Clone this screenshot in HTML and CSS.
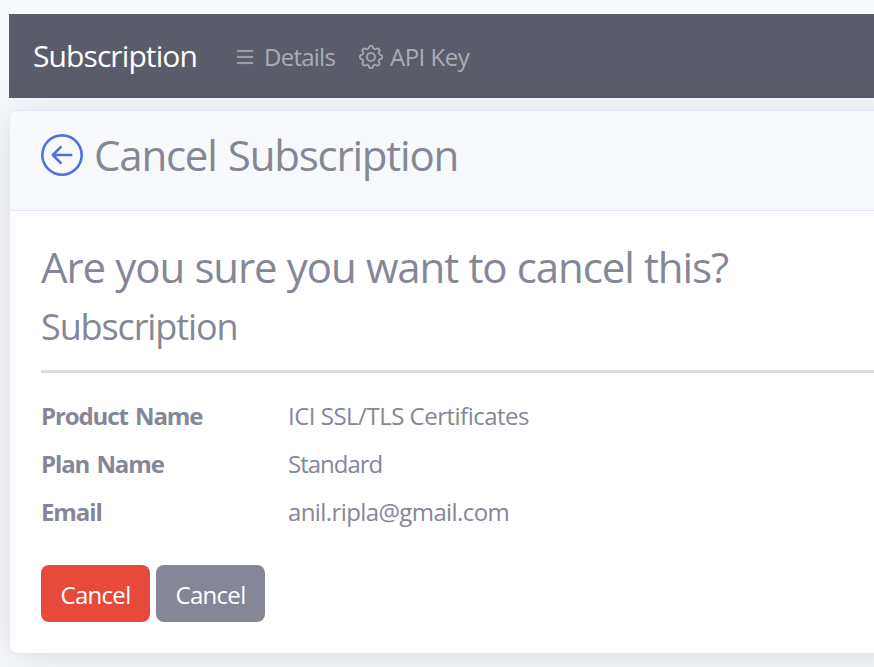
FILE: index.html
```html
<!DOCTYPE html>
<html lang="en">
<head>
<meta charset="utf-8">
<title>Cancel Subscription</title>
<link rel="stylesheet" href="styles.css">
</head>
<body>
<nav class="navbar">
  <a class="brand">Subscription</a>
  <a class="link details"><svg class="icon" viewBox="0 0 16 16"><path fill-rule="evenodd" d="M2.500 12a.5.5 0 0 1 .5-.5h10a.5.5 0 0 1 0 1H3a.5.5 0 0 1-.5-.5m0-4a.5.5 0 0 1 .5-.5h10a.5.5 0 0 1 0 1H3a.5.5 0 0 1-.5-.5m0-4a.5.5 0 0 1 .5-.5h10a.5.5 0 0 1 0 1H3a.5.5 0 0 1-.5-.5"/></svg><span>Details</span></a>
  <a class="link apikey"><svg class="icon" viewBox="0 0 16 16"><path d="M8 4.754a3.246 3.246 0 1 0 0 6.492 3.246 3.246 0 0 0 0-6.492M5.754 8a2.246 2.246 0 1 1 4.492 0 2.246 2.246 0 0 1-4.492 0"/><path d="M9.796 1.343c-.527-1.79-3.065-1.79-3.592 0l-.094.319a.873.873 0 0 1-1.255.52l-.292-.16c-1.64-.892-3.433.902-2.54 2.541l.159.292a.873.873 0 0 1-.52 1.255l-.319.094c-1.79.527-1.79 3.065 0 3.592l.319.094a.873.873 0 0 1 .52 1.255l-.16.292c-.892 1.64.901 3.434 2.541 2.54l.292-.159a.873.873 0 0 1 1.255.52l.094.319c.527 1.79 3.065 1.79 3.592 0l.094-.319a.873.873 0 0 1 1.255-.52l.292.16c1.64.893 3.434-.902 2.54-2.541l-.159-.292a.873.873 0 0 1 .52-1.255l.319-.094c1.79-.527 1.79-3.065 0-3.592l-.319-.094a.873.873 0 0 1-.52-1.255l.16-.292c.893-1.64-.902-3.433-2.541-2.54l-.292.159a.873.873 0 0 1-1.255-.52zm-2.633.283c.246-.835 1.428-.835 1.674 0l.094.319a1.873 1.873 0 0 0 2.693 1.115l.291-.16c.764-.415 1.6.42 1.184 1.185l-.159.292a1.873 1.873 0 0 0 1.116 2.692l.318.094c.835.246.835 1.428 0 1.674l-.319.094a1.873 1.873 0 0 0-1.115 2.693l.16.291c.415.764-.42 1.6-1.185 1.184l-.291-.159a1.873 1.873 0 0 0-2.693 1.116l-.094.318c-.246.835-1.428.835-1.674 0l-.094-.319a1.873 1.873 0 0 0-2.692-1.115l-.292.16c-.764.415-1.6-.42-1.184-1.185l.159-.291A1.873 1.873 0 0 0 1.945 8.93l-.319-.094c-.835-.246-.835-1.428 0-1.674l.319-.094A1.873 1.873 0 0 0 3.06 4.377l-.16-.292c-.415-.764.42-1.6 1.185-1.184l.292.159a1.873 1.873 0 0 0 2.692-1.115z"/></svg><span>API Key</span></a>
</nav>
<main class="card">
  <header class="card-header">
    <svg class="back" viewBox="0 0 16 16"><path fill-rule="evenodd" d="M1 8a7 7 0 1 0 14 0A7 7 0 0 0 1 8m15 0A8 8 0 1 1 0 8a8 8 0 0 1 16 0m-4.500-.5a.5.5 0 0 1 0 1H5.707l2.147 2.146a.5.5 0 0 1-.708.708l-3-3a.5.5 0 0 1 0-.708l3-3a.5.5 0 1 1 .708.708L5.707 7.500z"/></svg>
    <h1>Cancel Subscription</h1>
  </header>
  <div class="card-body">
    <h2>Are you sure you want to cancel this?</h2>
    <h3>Subscription</h3>
    <hr>
    <dl>
      <dt>Product Name</dt><dd class="product">ICI SSL/TLS Certificates</dd>
      <dt>Plan Name</dt><dd class="plan">Standard</dd>
      <dt>Email</dt><dd class="email">anil.ripla@gmail.com</dd>
    </dl>
    <div class="actions">
      <button class="btn danger">Cancel</button>
      <button class="btn secondary">Cancel</button>
    </div>
  </div>
</main>
</body>
</html>
```
FILE: styles.css
```css
* { box-sizing: border-box; }
body { margin: 0; padding: 14px 0 0 9px; height: 667px; overflow: hidden; background: #f8f9fc; color: #858796; font: 24px/36px "Segoe UI", "Open Sans", "Noto Sans", sans-serif; letter-spacing: -0.5px; }
.navbar { display: flex; align-items: center; height: 84px; padding-left: 24px; background: #5a5c69; color: #fff; white-space: nowrap; }
.brand { width: 200px; margin-bottom: 2px; font-size: 30px; line-height: 45px; letter-spacing: -0.9px; }
.link { display: flex; align-items: center; gap: 7px; margin-top: 2px; color: #acadb4; }
.details { width: 126px; letter-spacing: -0.75px; }
.icon { width: 24px; height: 24px; fill: currentColor; stroke: currentColor; stroke-width: .2; flex: none; }
.card { width: 900px; height: 544px; margin-top: 12px; background: #fff; border: 1px solid #e3e6f0; border-radius: 8px; box-shadow: 0 4px 42px rgba(58, 59, 69, .15); white-space: nowrap; }
.card-header { display: flex; height: 100px; padding: 23px 0 0 30.5px; background: #f8f9fc; border-bottom: 1px solid #e3e6f0; border-radius: 7px 7px 0 0; }
.back { width: 42px; height: 42px; fill: #4e73df; margin-right: 11.5px; flex: none; }
h1, h2, h3 { margin: 0; font-weight: 400; }
h1, h2 { font-size: 42px; line-height: 50px; }
h1 { margin-top: -4px; letter-spacing: -1.2px; word-spacing: 1.5px; }
h2 { letter-spacing: -1.1px; word-spacing: .5px; }
.card-body { padding: 31px 31px 32px; }
h3 { font-size: 36px; line-height: 43px; margin-top: 13px; letter-spacing: -1.1px; }
hr { height: 3px; margin: 22px 0 0; border: 0; background: #dddee2; }
dl { display: grid; grid-template-columns: 247px 1fr; grid-auto-rows: 48px; margin: 25px 0 0; }
dt { font-weight: 700; letter-spacing: -1.1px; word-spacing: 2px; }
dd { margin: 0; }
.plan { letter-spacing: -1px; }
.email { letter-spacing: -0.6px; }
.actions { display: flex; gap: 6px; margin-top: 23px; }
.btn { width: 109px; height: 57px; padding: 2px 0 0; border: 0; border-radius: 8px; color: #fff; font: inherit; letter-spacing: -0.7px; }
.danger { background: #e74a3b; }
.secondary { background: #858796; }
```
